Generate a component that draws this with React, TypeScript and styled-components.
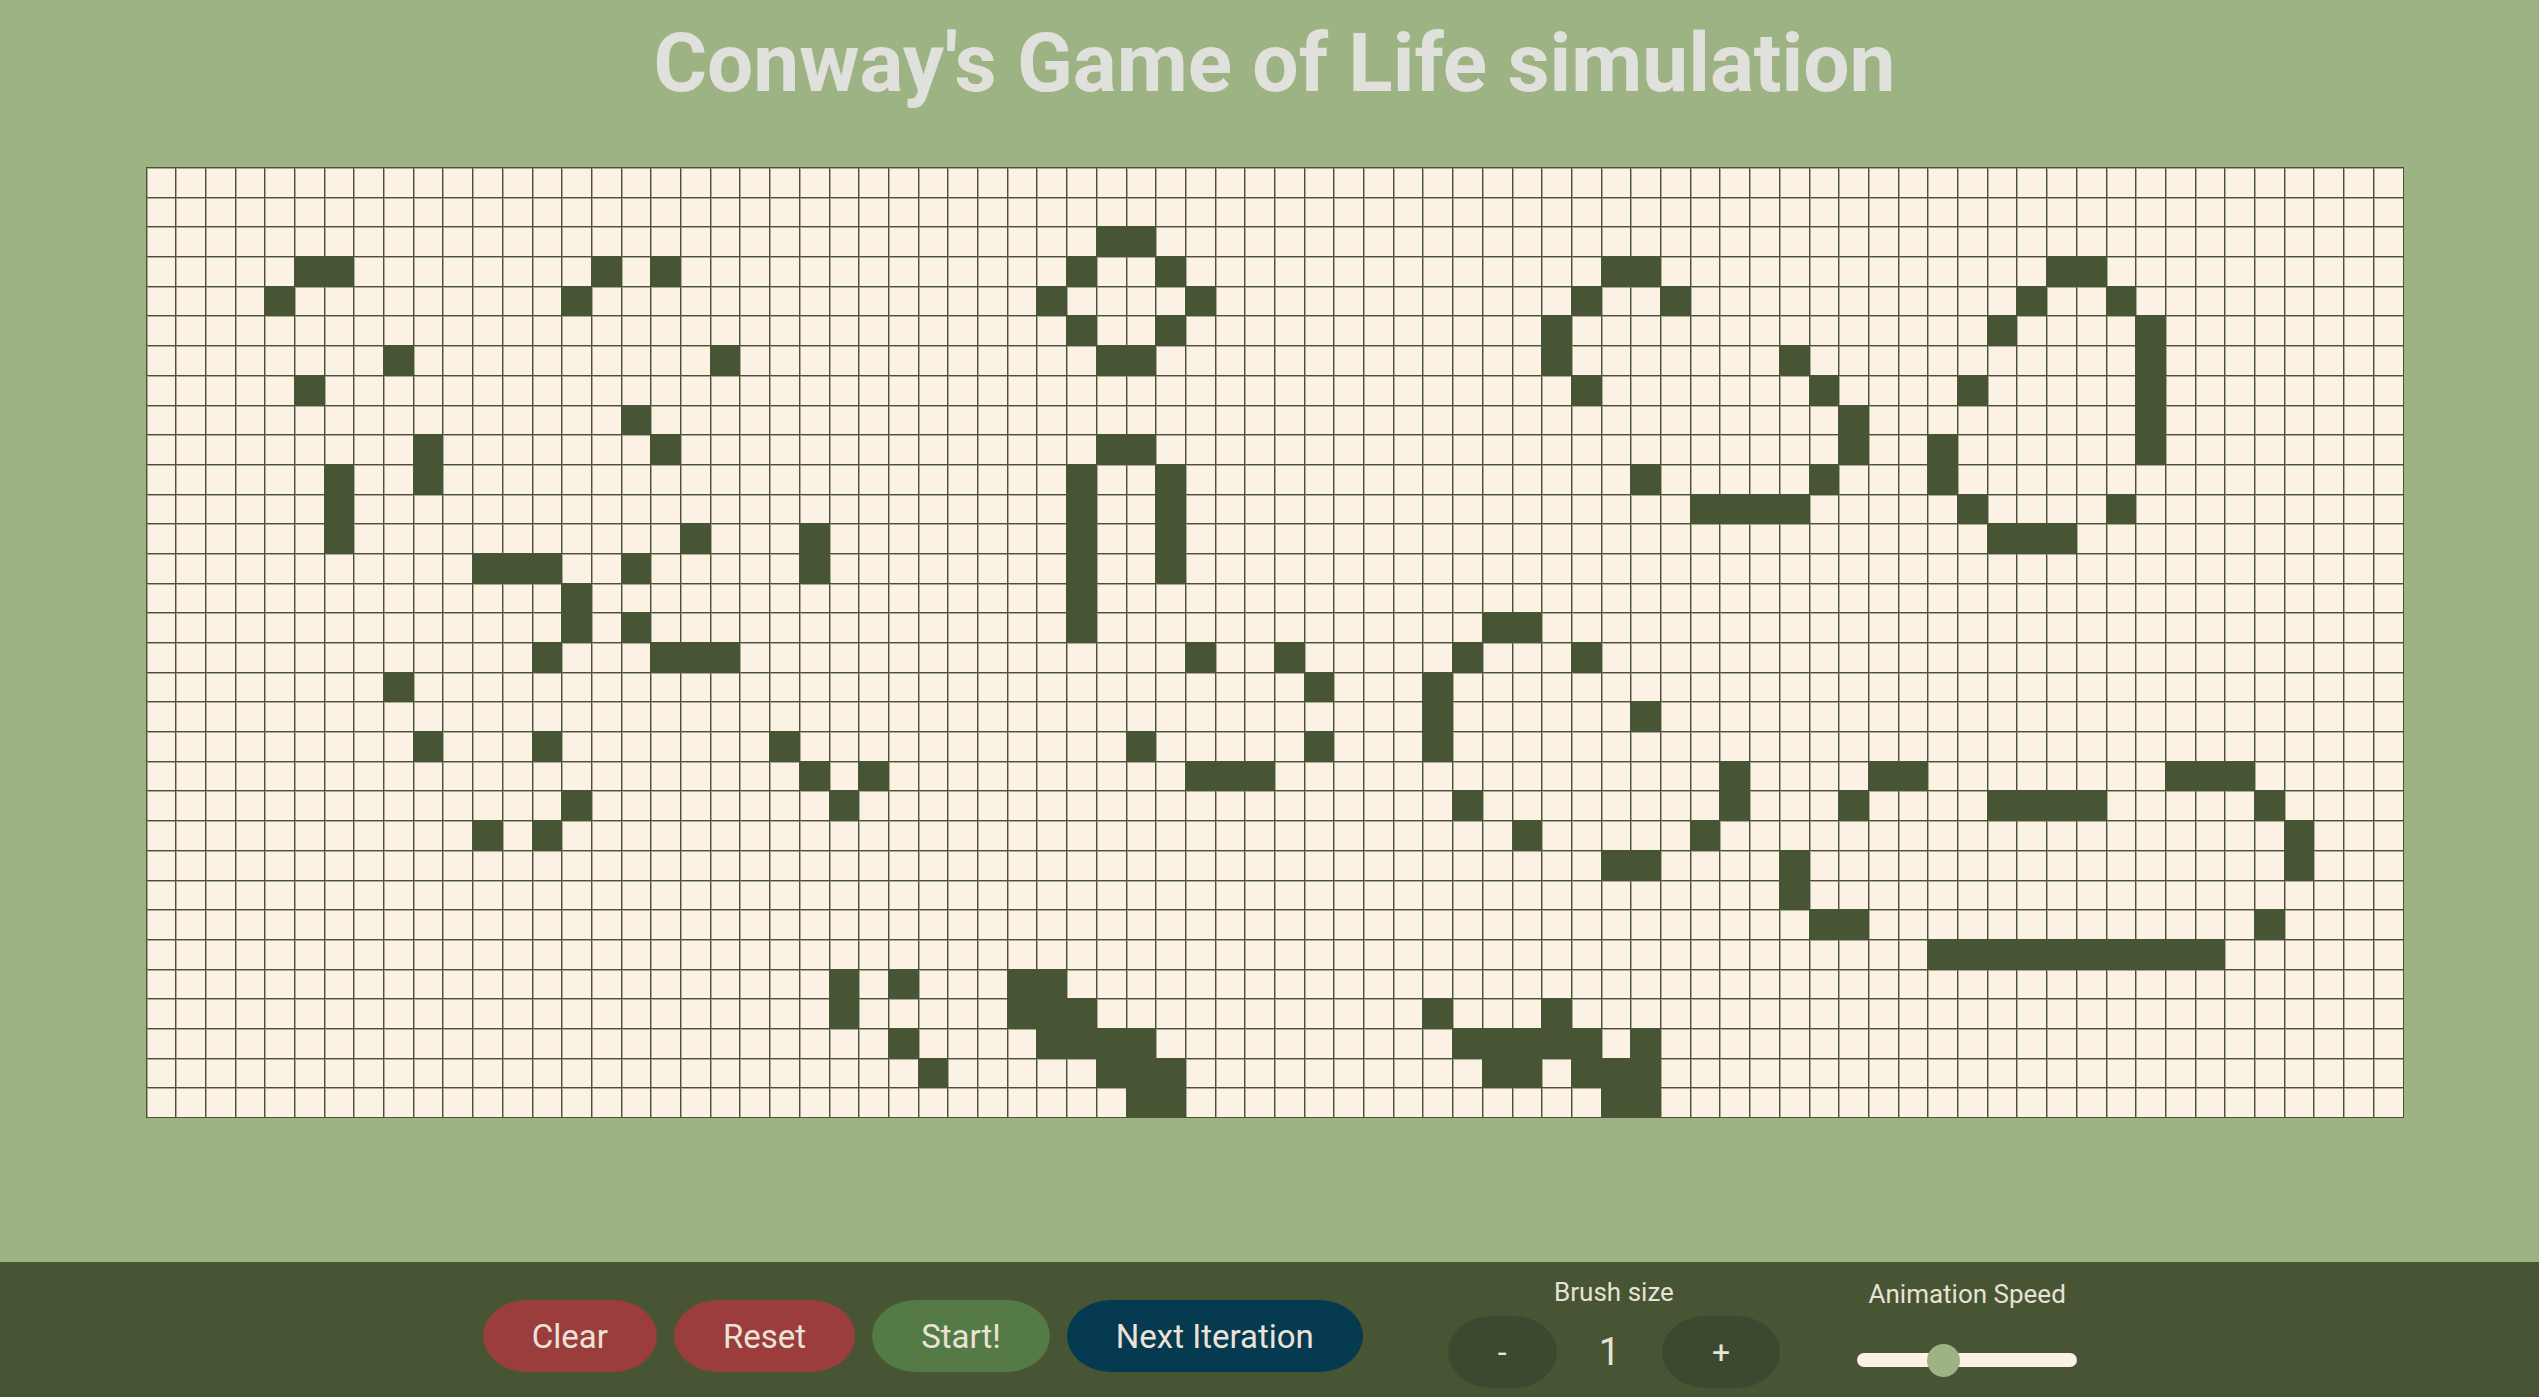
import React, { useState } from "react";
import styled, { createGlobalStyle } from "styled-components";

const COLS = 76;
const ROWS = 32;

const LIVE: Record<number, number[]> = {
  2: [32, 33],
  3: [5, 6, 15, 17, 31, 34, 49, 50, 64, 65],
  4: [4, 14, 30, 35, 48, 51, 63, 66],
  5: [31, 34, 47, 62, 67],
  6: [8, 19, 32, 33, 47, 55, 67],
  7: [5, 48, 56, 61, 67],
  8: [16, 57, 67],
  9: [9, 17, 32, 33, 57, 60, 67],
  10: [6, 9, 31, 34, 50, 56, 60],
  11: [6, 31, 34, 52, 53, 54, 55, 61, 66],
  12: [6, 18, 22, 31, 34, 62, 63, 64],
  13: [11, 12, 13, 16, 22, 31, 34],
  14: [14, 31],
  15: [14, 16, 31, 45, 46],
  16: [13, 17, 18, 19, 35, 38, 44, 48],
  17: [8, 39, 43],
  18: [43, 50],
  19: [9, 13, 21, 33, 39, 43],
  20: [22, 24, 35, 36, 37, 53, 58, 59, 68, 69, 70],
  21: [14, 23, 44, 53, 57, 62, 63, 64, 65, 71],
  22: [11, 13, 46, 52, 72],
  23: [49, 50, 55, 72],
  24: [55],
  25: [56, 57, 71],
  26: [60, 61, 62, 63, 64, 65, 66, 67, 68, 69],
  27: [23, 25, 29, 30],
  28: [23, 29, 30, 31, 43, 47],
  29: [25, 30, 31, 32, 33, 44, 45, 46, 47, 48, 50],
  30: [26, 32, 33, 34, 45, 46, 48, 49, 50],
  31: [33, 34, 49, 50],
};

const GlobalStyle = createGlobalStyle`
  html, body {
    margin: 0;
    padding: 0;
    background: #9db384;
    font-family: Roboto, "Liberation Sans", Arial, sans-serif;
  }
  #root {
    height: 100vh;
  }
`;

const Page = styled.div`
  height: 100vh;
  display: flex;
  flex-direction: column;
  background: #9db384;
`;

const Main = styled.main`
  flex: 1;
  display: flex;
  flex-direction: column;
  align-items: center;
  padding-left: 10px;
`;

const Title = styled.h1`
  margin: 13px 0 0;
  font-size: 82px;
  line-height: 100px;
  font-weight: 700;
  color: #e0e1dc;
  text-align: center;
`;

const Board = styled.div`
  margin-top: 54px;
  width: 2258px;
  height: 951px;
  box-sizing: border-box;
  display: grid;
  grid-template-columns: repeat(${COLS}, 1fr);
  grid-template-rows: repeat(${ROWS}, 1fr);
  gap: 1px;
  border: 1px solid #475534;
  background: #475534;
`;

const Cell = styled.div<{ $alive: boolean }>`
  background: ${(p) => (p.$alive ? "#475534" : "#fbf1e4")};
  box-shadow: inset 1px 1px 0 rgba(71, 85, 52, 0.45);
`;

const Footer = styled.footer`
  height: 135px;
  flex-shrink: 0;
  background: #475534;
  display: flex;
  justify-content: center;
  align-items: flex-start;
  padding-left: 21px;
  box-sizing: border-box;
`;

const ButtonGroup = styled.div`
  display: flex;
  gap: 17px;
  margin-top: 38px;
  margin-right: 85px;
`;

const ActionButton = styled.button<{ $bg: string }>`
  height: 72px;
  padding: 0 49px;
  border: none;
  border-radius: 44px / 36px;
  background: ${(p) => p.$bg};
  color: #ebe2d8;
  font-family: Roboto, "Liberation Sans", Arial, sans-serif;
  font-size: 33px;
  cursor: pointer;
`;

const Control = styled.div<{ $top: number; $gapRight?: number }>`
  display: flex;
  flex-direction: column;
  align-items: center;
  padding-top: ${(p) => p.$top}px;
  margin-right: ${(p) => p.$gapRight ?? 0}px;
`;

const ControlLabel = styled.div`
  font-size: 26px;
  line-height: 30px;
  color: #e6e2d6;
`;

const BrushRow = styled.div`
  display: flex;
  align-items: center;
  margin-top: 9px;
`;

const BrushButton = styled.button`
  height: 72px;
  padding: 0 50px;
  border: none;
  border-radius: 44px / 36px;
  background: #3d492e;
  color: #ebe2d8;
  font-family: Roboto, "Liberation Sans", Arial, sans-serif;
  font-size: 32px;
  cursor: pointer;
`;

const BrushValue = styled.span`
  margin: 0 42px;
  font-size: 38px;
  color: #e6e2d6;
`;

const Slider = styled.input`
  -webkit-appearance: none;
  appearance: none;
  width: 220px;
  height: 14px;
  margin: 44px 0 0;
  border-radius: 7px;
  background: #fbf1e4;
  outline: none;

  &::-webkit-slider-thumb {
    -webkit-appearance: none;
    appearance: none;
    width: 33px;
    height: 33px;
    border-radius: 50%;
    background: #9db384;
    border: none;
    cursor: pointer;
  }
  &::-moz-range-thumb {
    width: 33px;
    height: 33px;
    border-radius: 50%;
    background: #9db384;
    border: none;
  }
`;

export default function App() {
  const [speed, setSpeed] = useState(38);
  const [brush] = useState(1);

  const cells: React.ReactNode[] = [];
  for (let r = 0; r < ROWS; r++) {
    const live = new Set(LIVE[r] ?? []);
    for (let c = 0; c < COLS; c++) {
      cells.push(<Cell key={`${r}-${c}`} $alive={live.has(c)} />);
    }
  }

  return (
    <>
      <GlobalStyle />
      <Page>
        <Main>
          <Title>Conway's Game of Life simulation</Title>
          <Board>{cells}</Board>
        </Main>
        <Footer>
          <ButtonGroup>
            <ActionButton $bg="#9c3d3d">Clear</ActionButton>
            <ActionButton $bg="#9c3d3d">Reset</ActionButton>
            <ActionButton $bg="#547b45">Start!</ActionButton>
            <ActionButton $bg="#053a50">Next Iteration</ActionButton>
          </ButtonGroup>
          <Control $top={15} $gapRight={77}>
            <ControlLabel>Brush size</ControlLabel>
            <BrushRow>
              <BrushButton>-</BrushButton>
              <BrushValue>{brush}</BrushValue>
              <BrushButton>+</BrushButton>
            </BrushRow>
          </Control>
          <Control $top={17}>
            <ControlLabel>Animation Speed</ControlLabel>
            <Slider
              type="range"
              min={1}
              max={100}
              value={speed}
              onChange={(e) => setSpeed(Number(e.target.value))}
            />
          </Control>
        </Footer>
      </Page>
    </>
  );
}
